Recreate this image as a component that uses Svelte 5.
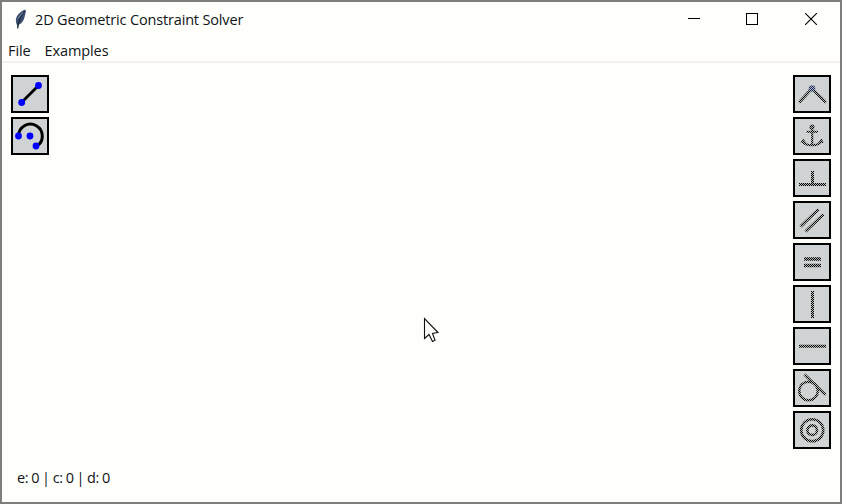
<script>
  const menus = ['File', 'Examples'];
  const constraints = ['coincident', 'anchor', 'perpendicular', 'parallel', 'equal', 'vertical', 'horizontal', 'tangent', 'concentric'];
  const counts = { e: 0, c: 0, d: 0 };
</script>

<div class="window">
  <header class="titlebar">
    <svg class="feather" width="14" height="20" viewBox="0 0 14 20">
      <path d="M11.5 0.5C8 1.5 3.5 5 2.2 9C1.5 11.5 2 14 3 16L3.5 19L4.8 15.8C8 14.5 9.8 11.5 10.6 8C11.2 5 12.4 3 11.5 0.5Z" fill="#3d4f70" />
      <path d="M10.5 2C7 6 4.5 11 3.7 19.5" fill="none" stroke="#1b2433" stroke-width="1.2" />
      <path d="M9.2 3L4.2 9.5" stroke="#8292ad" stroke-width="1" />
    </svg>
    <h1>2D Geometric Constraint Solver</h1>
    <div class="controls">
      <svg width="12" height="12" shape-rendering="crispEdges"><rect y="5" width="12" height="1" /></svg>
      <svg width="12" height="12" shape-rendering="crispEdges"><rect x=".5" y=".5" width="11" height="11" fill="none" stroke="#000" /></svg>
      <svg class="close" width="12" height="12"><path d="M0 0L12 12M12 0L0 12" stroke="#000" stroke-width="1.1" /></svg>
    </div>
  </header>

  <nav>
    {#each menus as menu}<span>{menu}</span>{/each}
  </nav>

  <main>
    <div class="tools">
      <button aria-label="line">
        <svg width="34" height="34">
          <path d="M8.5 25.5L25.5 8.5" stroke="#000" stroke-width="2.8" />
          <g fill="#00f"><circle cx="8.7" cy="25.5" r="3.4" /><circle cx="25.5" cy="8.5" r="3.4" /></g>
        </svg>
      </button>
      <button aria-label="arc">
        <svg width="34" height="34">
          <path d="M5.5 17A11.9 11.9 0 1 1 23.5 27.3" fill="none" stroke="#000" stroke-width="3" />
          <g fill="#00f"><circle cx="5.5" cy="17" r="3.4" /><circle cx="17" cy="17" r="3.4" /><circle cx="23" cy="27" r="3.4" /></g>
        </svg>
      </button>
    </div>

    <svg class="cursor" width="17" height="26" viewBox="0 0 17 26">
      <path d="M1.5 1.5V21.5L6 17.5L9.5 24.5L12 23.3L9.5 16.5L15 15.5Z" fill="#fefffb" stroke="#111" stroke-width="1.1" />
    </svg>

    <div class="tools">
      {#each constraints as kind}
        <button aria-label={kind}>
          <svg width="34" height="34">
            <defs>
              <pattern id="dots-{kind}" width="2" height="2" patternUnits="userSpaceOnUse" shape-rendering="crispEdges">
                <rect width="2" height="2" fill="#222" />
                <path d="M0 0h1v1H0zM1 1h1v1H1z" fill="#fff" />
              </pattern>
              <mask id="stipple-{kind}" maskUnits="userSpaceOnUse" x="0" y="0" width="34" height="34">
                <rect width="34" height="34" fill="url(#dots-{kind})" />
              </mask>
            </defs>
            <g mask="url(#stipple-{kind})" fill="none" stroke="#000" stroke-width="3">
              {#if kind === 'coincident'}
                <path d="M4 25.5L17 11.5L31 25.5" stroke-width="2.8" />
                <circle cx="17" cy="11.5" r="3.3" fill="#14245c" stroke="none" />
              {:else if kind === 'anchor'}
                <circle cx="17" cy="8" r="1.5" stroke-width="2" />
                <path d="M17.2 9V27M11.5 12.7H23M7.5 22C9 25 13 26.3 17 26.3S25 25 26.8 22" stroke-width="2.1" />
                <path d="M5.5 24L8 19.5L11.5 24ZM29 24L26.5 19.5L23 24Z" fill="#000" stroke="none" />
              {:else if kind === 'perpendicular'}
                <path d="M17.5 10V23M4 23.5H31" />
              {:else if kind === 'parallel'}
                <path d="M5.5 23.5L23.5 6.2M10.5 28.5L28.5 11.2" stroke-width="2.8" />
              {:else if kind === 'equal'}
                <path d="M9 14H26M9 20.5H26" stroke-width="3.4" />
              {:else if kind === 'vertical'}
                <path d="M17.5 4V31" />
              {:else if kind === 'horizontal'}
                <path d="M4 17.2H31" />
              {:else if kind === 'tangent'}
                <circle cx="13.5" cy="20" r="9.3" stroke-width="2.5" />
                <path d="M9.5 3.5L30.5 24" stroke-width="2.6" />
              {:else}
                <circle cx="17.2" cy="17.2" r="11" stroke-width="2.6" />
                <circle cx="17.2" cy="17.2" r="4.8" stroke-width="2.6" />
              {/if}
            </g>
          </svg>
        </button>
      {/each}
    </div>
  </main>

  <footer>e: {counts.e} | c: {counts.c} | d: {counts.d}</footer>
</div>

<style>
  .window {
    box-sizing: border-box;
    width: 842px;
    height: 504px;
    border: 2px solid #7e7e7c;
    background: #fefffb;
    color: #101418;
    font: 14.5px/20px "Open Sans", "Noto Sans", sans-serif;
    display: flex;
    flex-direction: column;
    overflow: hidden;
  }
  .titlebar {
    height: 36px;
    display: flex;
    align-items: center;
    padding: 0 23px 0 12px;
    flex: none;
  }
  .feather { margin: 0 7px 2px 0; }
  h1 {
    margin: 0;
    font: inherit;
    letter-spacing: -0.16px;
    white-space: nowrap;
  }
  .controls {
    margin: 0 0 2px auto;
    display: flex;
    gap: 46px;
  }
  .controls svg { display: block; }
  .controls .close { margin-left: 1px; }
  nav {
    height: 25px;
    box-sizing: border-box;
    flex: none;
    display: flex;
    align-items: center;
    gap: 14px;
    padding: 2px 6px 0;
    border-bottom: 2px solid #f5efee;
    letter-spacing: -0.1px;
  }
  main {
    flex: 1;
    position: relative;
    display: flex;
    justify-content: space-between;
    padding: 12px 9px 0;
  }
  .tools {
    display: flex;
    flex-direction: column;
    gap: 4px;
  }
  button {
    box-sizing: border-box;
    width: 38px;
    height: 38px;
    padding: 0;
    border: 2px solid #000;
    border-radius: 0;
    background: #d0d3d3;
  }
  button svg { display: block; }
  .cursor {
    position: absolute;
    left: 421px;
    top: 254px;
  }
  footer {
    height: 34px;
    flex: none;
    padding-left: 15px;
    letter-spacing: -0.4px;
    word-spacing: -0.35px;
  }
</style>
